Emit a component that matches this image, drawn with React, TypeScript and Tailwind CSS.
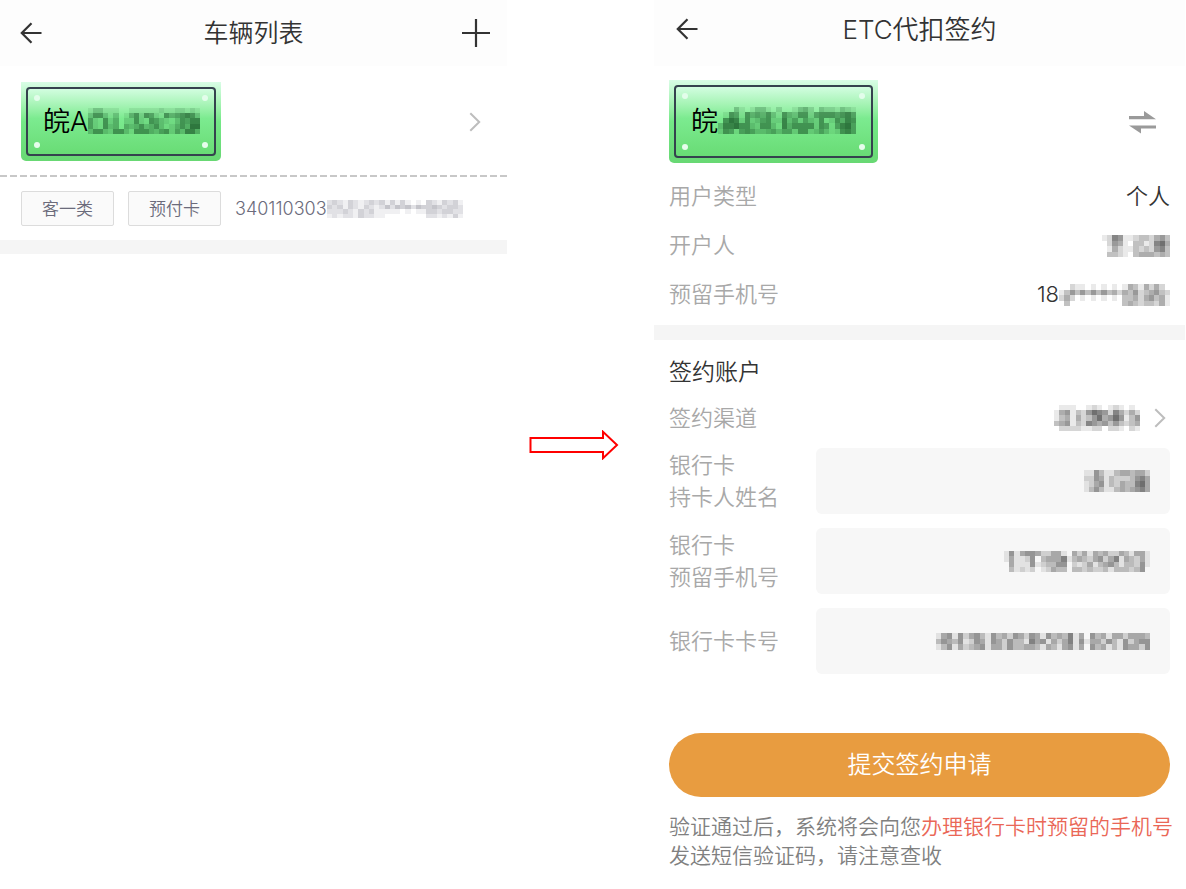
import { useState } from 'react';
import type { ReactNode } from 'react';

// Each digit is one block, 0 (clear) to 9 (solid)
const MASKS = {
  plateLeft: [
    '1331110011111121122121',
    '3663130146265216456763',
    '5216240226216532136577',
    '5216340434634631246488',
    '3663266316664356253774',
  ],
  plateRight: [
    '00031013310200134203221321',
    '01651645463164366256665675',
    '06872623562273525326126476',
    '37786632663174666626515785',
    '26515653345355266235312675',
  ],
  idNumber: [
    '23213212323131310103213231',
    '32313213212424342433432332',
    '22232132311111010113323322',
    '12122132211000000002212131',
  ],
  owner: ['1265112332453', '0254103312674', '0142113232563', '0332103444343'],
  phone: ['002110101010143142420', '135353535342435234532', '242010101010334245341', '030000000000343233241'],
  channel: ['0111001210121010', '1451325765264242', '1341423574575135', '3451326545353234', '0222211220221021'],
  holder: ['1153113443442', '2254132223564', '1245132433674', '1353113434564'],
  bankPhone: [
    '1514554224410424143422431441',
    '1411250344461343245246143241',
    '0411151233550212413453133251',
    '0312120124330332322313332350',
  ],
  cardNumber: [
    '145152453153425425415343614053414424443',
    '354351254154253316451424615144253152455',
    '135142345144253344314314514053413154425',
  ],
};

interface MosaicProps {
  rows: string[];
  color: string;
  className: string;
}

function Mosaic({ rows, color, className }: MosaicProps) {
  return (
    <svg
      viewBox={`0 0 ${rows[0].length} ${rows.length}`}
      preserveAspectRatio="none"
      shapeRendering="crispEdges"
      fill={color}
      className={className}
      aria-hidden="true"
    >
      {rows.map((row, y) =>
        row.split('').map((level, x) => (
          <rect key={`${x}-${y}`} x={x} y={y} width="1" height="1" fillOpacity={Number(level) / 10} />
        ))
      )}
    </svg>
  );
}

function BackIcon() {
  return (
    <svg viewBox="0 0 22 22" className="w-[22px] h-[22px]" fill="none" stroke="#333" strokeWidth="2.2">
      <path d="M21.5 11H2M11.5 1.3L1.8 11l9.7 9.7" />
    </svg>
  );
}

function Chevron() {
  return (
    <svg viewBox="0 0 12 20" className="w-3 h-5 shrink-0" fill="none" stroke="#bdbdbd" strokeWidth="2">
      <path d="M1.3 1.2L10.2 10l-8.9 8.8" />
    </svg>
  );
}

function Plate({ large = false, children }: { large?: boolean; children: ReactNode }) {
  return (
    <div
      className={`p-[5px] rounded-b-[5px] bg-linear-to-b from-[#d9fde6] via-[#74e987] via-50% to-[#68d873] ${
        large ? 'w-[209px] h-[83px]' : 'w-[200px] h-[79px]'
      }`}
    >
      <div className="relative h-full flex items-center pl-[15px] pt-0.5 border-2 border-[#35424e] rounded bg-linear-to-b from-[#d2fde0] via-[#7ceb90] via-45% to-[#69dc75] text-[27px] text-black whitespace-nowrap">
        <span className="absolute left-1.5 top-1.5 size-1.5 rounded-full bg-[#e3fdeb]" />
        <span className="absolute right-1.5 top-1.5 size-1.5 rounded-full bg-[#e3fdeb]" />
        <span className="absolute left-1.5 bottom-1.5 size-1.5 rounded-full bg-[#e6fdec]" />
        <span className="absolute right-1.5 bottom-1.5 size-1.5 rounded-full bg-[#e6fdec]" />
        {children}
      </div>
    </div>
  );
}

function VehicleList() {
  return (
    <section>
      <header className="h-[66px] flex items-center justify-between px-5 bg-[#fdfdfd]">
        <button aria-label="返回">
          <BackIcon />
        </button>
        <h1 className="pl-1 pt-0.5 text-[25px] text-[#333]">车辆列表</h1>
        <button aria-label="添加车辆" className="-mr-1">
          <svg viewBox="0 0 30 30" className="w-[30px] h-[30px]" stroke="#333" strokeWidth="2.2">
            <path d="M1 15h28M15 1v28" />
          </svg>
        </button>
      </header>

      <button className="w-full flex items-center justify-between pl-[21px] pr-[26px] pt-4 pb-3.5" aria-label="车辆详情">
        <Plate>
          皖A
          <Mosaic rows={MASKS.plateLeft} color="#1c5a2b" className="mb-1 w-28 h-[26px]" />
        </Plate>
        <Chevron />
      </button>
      <div className="h-0.5 bg-[repeating-linear-gradient(90deg,#c8c8c8_0_7px,transparent_7px_10px)]" />

      <div className="flex items-center gap-3.5 pl-[21px] pt-3.5 pb-3.5 text-[17px] text-[#6b6b7b]">
        <span className="w-[93px] h-[35px] flex items-center justify-center pt-0.5 border border-[#dcdcdc] rounded-xs bg-[#fafafa]">客一类</span>
        <span className="w-[93px] h-[35px] flex items-center justify-center pt-0.5 border border-[#dcdcdc] rounded-xs bg-[#fafafa]">预付卡</span>
        <span className="flex items-center text-lg">
          340110303
          <Mosaic rows={MASKS.idNumber} color="#6b6b7b" className="w-[136px] h-[18px]" />
        </span>
      </div>
      <div className="h-3.5 bg-[#f5f5f5]" />
    </section>
  );
}

function InfoRow({ label, children }: { label: string; children: ReactNode }) {
  return (
    <div className="h-[49px] flex items-center justify-between pt-0.5">
      <dt className="text-[#a8a8a8]">{label}</dt>
      <dd className="flex items-center text-[#333]">{children}</dd>
    </div>
  );
}

interface FieldProps {
  id: string;
  label: ReactNode;
  mask: string[];
  maskClass: string;
}

function Field({ id, label, mask, maskClass }: FieldProps) {
  const [value, setValue] = useState('');

  return (
    <div className="flex items-center">
      <label htmlFor={id} className="w-[147px] shrink-0 leading-8 text-[#a8a8a8]">
        {label}
      </label>
      <div className="relative flex-1">
        <input
          id={id}
          value={value}
          onChange={(e) => setValue(e.target.value)}
          className="block w-full h-[66px] px-5 rounded-md bg-[#f7f7f7] text-right text-[#333] outline-none"
        />
        {!value && (
          <div className="absolute inset-y-0 right-5 flex items-center pointer-events-none">
            <Mosaic rows={mask} color="#333" className={maskClass} />
          </div>
        )}
      </div>
    </div>
  );
}

function SignForm() {
  return (
    <section className="text-[22px]">
      <header className="h-[66px] grid grid-cols-[1fr_auto_1fr] items-center px-[22px] pb-2 bg-[#fdfdfd]">
        <button aria-label="返回" className="justify-self-start">
          <BackIcon />
        </button>
        <h1 className="text-[26px] text-[#333]">ETC代扣签约</h1>
      </header>

      <div className="flex items-center justify-between pl-[15px] pr-[29px] pt-3.5 pb-2">
        <Plate large>
          皖
          <Mosaic rows={MASKS.plateRight} color="#1c5a2b" className="mb-1 w-[138px] h-[27px]" />
        </Plate>
        <button aria-label="切换车辆">
          <svg viewBox="0 0 28 24" className="w-7 h-6" fill="#9a9a9a">
            <path d="M1 6h15V1L28 9.200H1zM28 15.500H1l12 8v-5h15z" />
          </svg>
        </button>
      </div>

      <dl className="px-[15px] pb-[7px]">
        <InfoRow label="用户类型">个人</InfoRow>
        <InfoRow label="开户人">
          <Mosaic rows={MASKS.owner} color="#333" className="w-[68px] h-[22px]" />
        </InfoRow>
        <InfoRow label="预留手机号">
          18
          <Mosaic rows={MASKS.phone} color="#333" className="w-[111px] h-[22px]" />
        </InfoRow>
      </dl>
      <div className="h-[15px] bg-[#f5f5f5]" />

      <form className="px-[15px]" onSubmit={(e) => e.preventDefault()}>
        <h2 className="pt-4 text-[23px] leading-8 text-[#333]">签约账户</h2>
        <button type="button" className="w-full h-15 flex items-center justify-between">
          <span className="text-[#a8a8a8]">签约渠道</span>
          <span className="flex items-center gap-3.5 pr-1">
            <Mosaic rows={MASKS.channel} color="#333" className="w-[86px] h-[26px]" />
            <Chevron />
          </span>
        </button>

        <div className="flex flex-col gap-3.5">
          <Field
            id="holder"
            label={<>银行卡<br />持卡人姓名</>}
            mask={MASKS.holder}
            maskClass="w-[66px] h-[22px]"
          />
          <Field
            id="bank-phone"
            label={<>银行卡<br />预留手机号</>}
            mask={MASKS.bankPhone}
            maskClass="w-[146px] h-[21px]"
          />
          <Field id="card-number" label="银行卡卡号" mask={MASKS.cardNumber} maskClass="w-[214px] h-[17px]" />
        </div>

        <button type="submit" className="w-full h-16 mt-[59px] rounded-full bg-[#e89c40] text-2xl text-white">
          提交签约申请
        </button>
        <p className="pt-[15px] text-[21px] leading-[29px] text-[#808080] whitespace-nowrap">
          验证通过后，系统将会向您<span className="text-[#ea6757]">办理银行卡时预留的手机号</span>
          <br />
          发送短信验证码，请注意查收
        </p>
      </form>
    </section>
  );
}

export default function App() {
  return (
    <main className="min-h-screen grid grid-cols-[minmax(0,507fr)_minmax(0,147fr)_minmax(0,531fr)] pr-px bg-white font-['Inter','Noto_Sans_CJK_SC',sans-serif] font-[350] overflow-x-hidden">
      <VehicleList />
      <div className="flex items-center justify-center pr-3.5">
        <svg viewBox="0 0 90 30" className="w-[90px] h-[30px] shrink-0" fill="white" stroke="#f00" strokeWidth="2">
          <path d="M1.500 8H74V1.800L88 15 74 28.200V22H1.500z" />
        </svg>
      </div>
      <SignForm />
    </main>
  );
}
